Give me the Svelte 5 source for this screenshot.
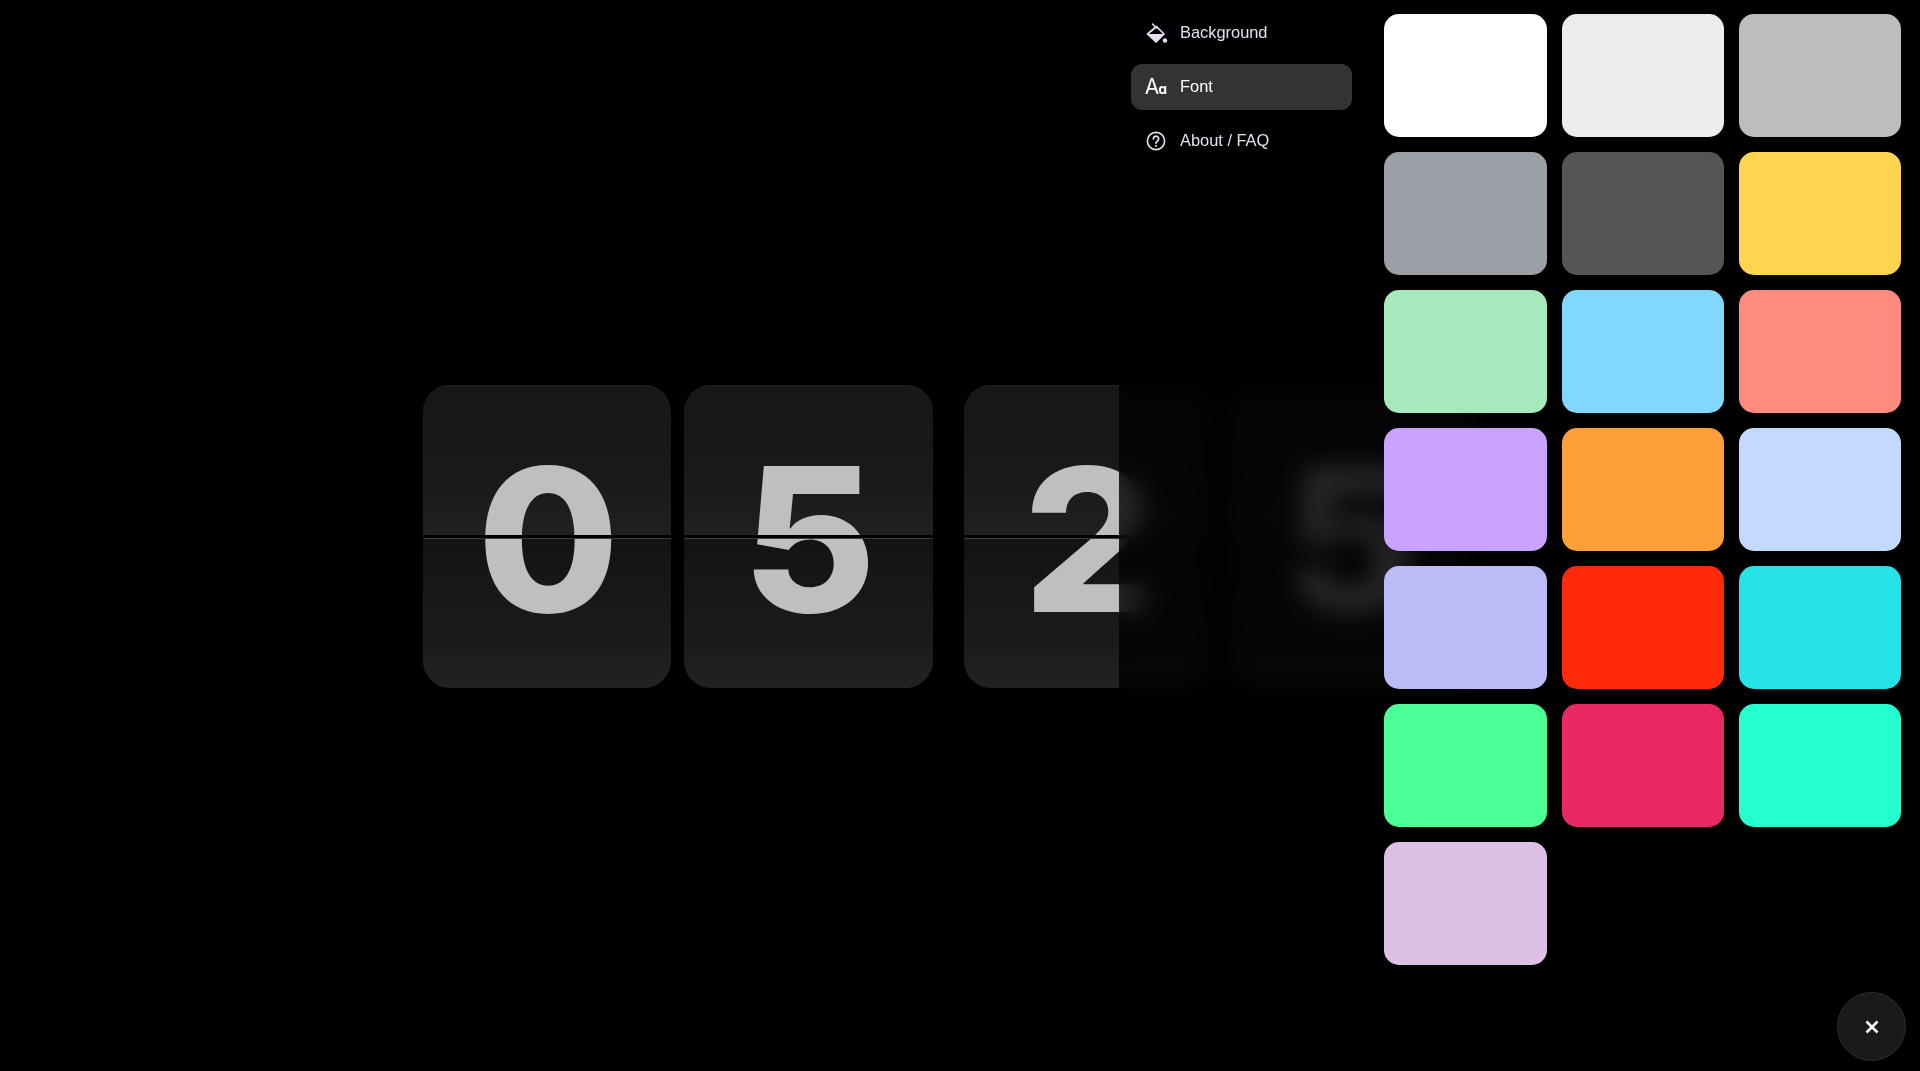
<script lang="ts">
  const digits = [['0', '5'], ['2', '5']];
  const swatches = [
    '#ffffff', '#ececec', '#bdbdbd',
    '#9aa0a6', '#555555', '#ffd54f',
    '#a8e8bd', '#80d8ff', '#ff8a80',
    '#c9a3ff', '#ff9f3a', '#c3d9ff',
    '#bbbbf8', '#ff2a0a', '#26e3e8',
    '#4cff95', '#e92864', '#24ffd0',
    '#dcc0e6'
  ];
  let active = $state('Font');
  let selected = $state('#dcc0e6');
</script>

<main class="clock">
  {#each digits as group}
    <div class="group">
      {#each group as d}
        <div class="flip"><span>{d}</span></div>
      {/each}
    </div>
  {/each}
</main>

<aside class="panel">
  <nav class="menu">
    <button class="item" class:active={active === 'Background'} onclick={() => (active = 'Background')}>
      <svg class="icon" viewBox="0 0 24 24" width="24" height="24">
        <path d="M8.5 3 L12.5 7" fill="none" stroke="currentColor" stroke-width="1.6" stroke-linecap="round" />
        <path d="M12.5 5.5 L20 13 L12 21 L3.5 13 Z" fill="none" stroke="currentColor" stroke-width="1.7" stroke-linejoin="round" />
        <path d="M3.5 13 H20 L12 21 Z" fill="currentColor" />
        <circle cx="21" cy="19.5" r="2.2" fill="currentColor" />
      </svg>
      Background
    </button>
    <button class="item" class:active={active === 'Font'} onclick={() => (active = 'Font')}>
      <span class="icon aa"><span class="big">A</span><span class="small">ɑ</span></span>
      Font
    </button>
    <button class="item" class:active={active === 'About'} onclick={() => (active = 'About')}>
      <svg class="icon" viewBox="0 0 24 24" width="24" height="24" fill="none" stroke="currentColor">
        <circle cx="12" cy="12" r="8.6" stroke-width="1.6" />
        <path d="M9.4 9.8 a2.6 2.6 0 1 1 4.1 2.1 c-1 .7 -1.5 1.1 -1.5 2.2" stroke-width="1.8" stroke-linecap="round" />
        <circle cx="12" cy="16.8" r="1" fill="currentColor" stroke="none" />
      </svg>
      About / FAQ
    </button>
  </nav>

  <div class="swatches">
    {#each swatches as color}
      <button
        class="swatch"
        style="background: {color}"
        aria-label={color}
        onclick={() => (selected = color)}
      ></button>
    {/each}
  </div>
</aside>

<button class="close" aria-label="Close">
  <svg viewBox="0 0 14 14" width="14" height="14" fill="none" stroke="#fff" stroke-width="2.6">
    <path d="M1.5 1.5 L12.5 12.5 M12.5 1.5 L1.5 12.5" />
  </svg>
</button>

<style>
  :global(body) { background: #000; overflow: hidden; }

  .clock {
    height: 1071px; box-sizing: border-box; padding: 2px 24px 0 0;
    display: flex; align-items: center; justify-content: center; gap: 31px;
  }
  .group { display: flex; gap: 13px; }

  .flip {
    position: relative;
    width: 248.5px; height: 303px; border-radius: 27px;
    display: flex; align-items: center; justify-content: center;
    background: linear-gradient(#171717 0%, #191919 30%, #1f2120 49.5%, #131313 50.5%, #161616 62%, #1b1b1b 85%, #212322 100%);
    box-shadow: inset 0 1px 0 #212121;
    color: #bfbfbf;
    font: 800 200px/1 Inter, "Liberation Sans", sans-serif;
  }
  .flip span { transform: translate(1px, 2px) scaleX(1.03); }
  .flip::after {
    content: ''; position: absolute; left: 0; right: 0; top: 150px;
    height: 3px; background: #000; border-bottom: 1px solid #3c3c3c;
  }

  .panel {
    position: fixed; top: 0; right: 0; bottom: 0; left: 1119px;
    display: flex; gap: 32.25px; padding: 14px 19px 0 12px; box-sizing: border-box;
    background: rgba(0, 0, 0, 0.8);
    backdrop-filter: blur(12px);
  }

  .menu { width: 221px; flex: none; margin-top: -4.5px; display: flex; flex-direction: column; gap: 8px; }
  .item {
    height: 46px; padding: 0 0 0 13px; border: none; border-radius: 11px;
    display: flex; align-items: center; gap: 12px;
    background: none; color: #e7dff0; text-align: left; cursor: pointer;
    font: 400 16.4px "Liberation Sans", Arial, sans-serif;
  }
  .item.active { background: #333; color: #fff; }
  .icon { width: 24px; height: 24px; flex: none; }
  .aa { display: flex; align-items: baseline; justify-content: center; font-family: Inter, sans-serif; line-height: 24px; }
  .big { font-size: 21px; font-weight: 400; }
  .small { font-size: 14px; font-weight: 700; margin-left: -1px; }

  .swatches {
    flex: 1; display: grid; grid-template-columns: repeat(3, 1fr);
    grid-auto-rows: 123px; column-gap: 15px; row-gap: 15px; align-content: start;
  }
  .swatch { border: none; border-radius: 15px; padding: 0; cursor: pointer; }

  .close {
    position: fixed; left: 1837px; top: 992px;
    width: 69px; height: 69px; border-radius: 50%;
    display: flex; align-items: center; justify-content: center;
    background: #1a1a1a; border: 1px solid #2e2e2e; box-sizing: border-box; cursor: pointer;
  }
</style>
